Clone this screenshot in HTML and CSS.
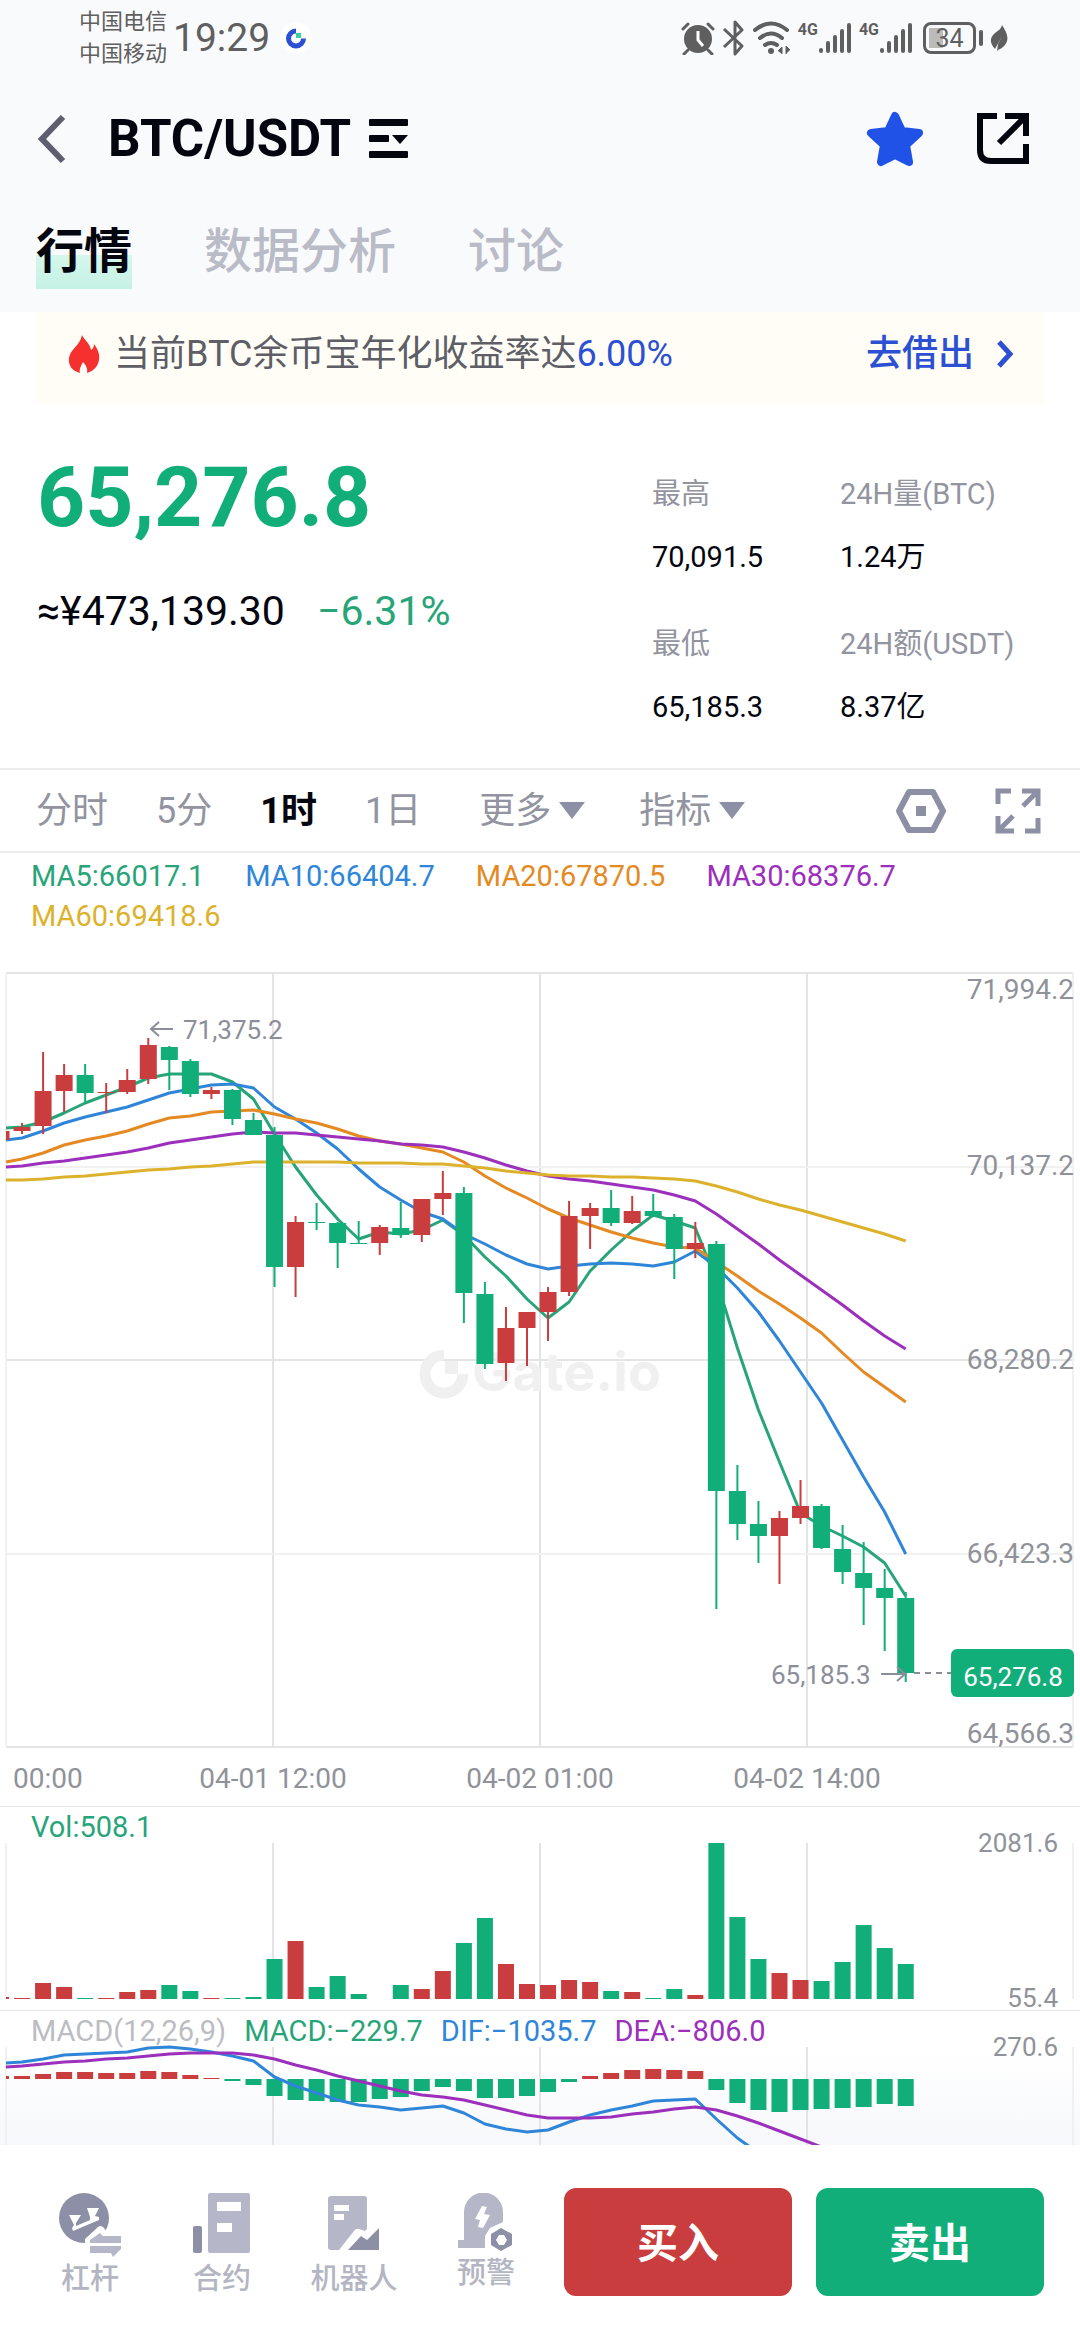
FILE: index.html
```html
<!DOCTYPE html>
<html lang="zh-CN">
<head>
  <meta charset="UTF-8" />
  <meta name="viewport" content="width=device-width, initial-scale=1.0" />
  <title>BTC/USDT</title>
  <link rel="stylesheet" href="styles.css">
</head>
<body>
  <header class="top">
    <div class="status">
      <div class="carriers"><span>中国电信</span><span>中国移动</span></div>
      <span class="clock">19:29</span>
      <svg class="app-dot" width="32" height="32" viewBox="0 0 32 32">
        <circle cx="16" cy="16" r="16" fill="#fff"/>
        <path d="M16 9a7.500 7.500 0 1 0 7.500 7.500" fill="none" stroke="#2c50d2" stroke-width="5"/>
        <path d="M16 11h5v5h-5z" fill="#3fcf9c"/>
      </svg>
      <div class="status-icons">
        <svg width="34" height="34" viewBox="0 0 34 34">
          <circle cx="17" cy="18" r="14" fill="#5f5f5f"/>
          <path d="M2 8l5-5M32 8l-5-5M7 29l-4 4M27 29l4 4" stroke="#5f5f5f" stroke-width="3" stroke-linecap="round"/>
          <path d="M17 10v9l5 6" fill="none" stroke="#fff" stroke-width="3"/>
        </svg>
        <svg width="24" height="36" viewBox="0 0 24 36">
          <path d="M2 9l18 17-7 8V2l7 8L2 27" fill="none" stroke="#5f5f5f" stroke-width="3" stroke-linejoin="round"/>
        </svg>
        <svg class="wifi" width="38" height="34" viewBox="0 0 38 34">
          <g fill="none" stroke="#5f5f5f" stroke-width="4" stroke-linecap="round">
            <path d="M2 9q16-13 32 0M7 17q11-9 22 0M12 24q6-4 12 0"/>
          </g>
          <circle cx="18" cy="30" r="3" fill="#5f5f5f"/>
          <path d="M25 30l4-4v7M37 29l-4-4v8" fill="#5f5f5f" stroke="#5f5f5f"/>
        </svg>
        <div class="signal">
          <span>4G</span>
          <svg width="34" height="32" viewBox="0 0 34 32">
            <path d="M3 28v1M10 21v8M17 15v14M24 9v20M31 3v26" stroke="#5f5f5f" stroke-width="4" stroke-linecap="round"/>
          </svg>
        </div>
        <div class="signal">
          <span>4G</span>
          <svg width="34" height="32" viewBox="0 0 34 32">
            <path d="M3 28v1M10 21v8M17 15v14M24 9v20M31 3v26" stroke="#5f5f5f" stroke-width="4" stroke-linecap="round"/>
          </svg>
        </div>
        <div class="battery"><span>34</span></div>
        <svg class="leaf" width="18" height="28" viewBox="0 0 18 28">
          <path d="M12 1c6 9 8 16 1 22-2 2-4 2-6 4l1-7 4-8-7 13C-1 19 0 13 5 9c4-3 6-4 7-8z" fill="#5f5f5f"/>
        </svg>
      </div>
    </div>

    <div class="title-bar">
      <button class="icon-btn back" aria-label="返回">
        <svg width="28" height="48" viewBox="0 0 28 48"><path d="M25 2L4 24l21 22" fill="none" stroke="#5d5e70" stroke-width="6"/></svg>
      </button>
      <h1>BTC/USDT</h1>
      <button class="icon-btn" aria-label="切换交易对">
        <svg width="40" height="40" viewBox="0 0 40 40" fill="#03050f">
          <rect x="0" y="0" width="39" height="7" rx="1"/>
          <rect x="0" y="16" width="20" height="7" rx="1"/>
          <path d="M23 16h16l-8 9z"/>
          <rect x="0" y="32" width="39" height="7" rx="1"/>
        </svg>
      </button>
      <button class="icon-btn star" aria-label="收藏">
        <svg width="58" height="56" viewBox="0 0 58 56">
          <path d="M29 5l7 15 17 2-13 12 3 17-14-7-14 7 3-17L5 22l17-2z" fill="#2152e8" stroke="#2152e8" stroke-width="8" stroke-linejoin="round"/>
        </svg>
      </button>
      <button class="icon-btn" aria-label="分享">
        <svg width="54" height="52" viewBox="0 0 54 52" fill="none" stroke="#03050f" stroke-width="6">
          <path d="M21 3H4v34q0 11 11 11h35V31M29 3h21v20M49 4L23 30"/>
        </svg>
      </button>
    </div>

    <nav class="tabs">
      <a href="#market" class="active">行情</a>
      <a href="#data">数据分析</a>
      <a href="#talk">讨论</a>
    </nav>
  </header>

  <main>
    <div class="notice">
      <svg width="32" height="38" viewBox="0 0 32 38">
        <path d="M14 0c2 5 8 8 9 15 2-1 3-3 3-6 4 5 6 11 5 16-1 6-5 11-12 13 1-4-1-8-4-11-2 4-4 7-3 11C4 36 0 30 1 23 2 14 12 11 14 0z" fill="#f5302f"/>
      </svg>
      <p>当前BTC余币宝年化收益率达<b>6.00%</b></p>
      <a href="#lend">去借出
        <svg width="18" height="28" viewBox="0 0 18 28"><path d="M3 2l11 12L3 26" fill="none" stroke="#2c50d2" stroke-width="5"/></svg>
      </a>
    </div>

    <section class="quote">
      <div>
        <p class="price">65,276.8</p>
        <p class="fiat">≈¥473,139.30 <span>−6.31%</span></p>
      </div>
      <dl class="stats">
        <div><dt>最高</dt><dd>70,091.5</dd></div>
        <div><dt>24H量(BTC)</dt><dd>1.24万</dd></div>
        <div><dt>最低</dt><dd>65,185.3</dd></div>
        <div><dt>24H额(USDT)</dt><dd>8.37亿</dd></div>
      </dl>
    </section>

    <div class="periods">
      <button>分时</button>
      <button>5分</button>
      <button class="active">1时</button>
      <button>1日</button>
      <button class="more">更多<i></i></button>
      <button class="more">指标<i></i></button>
      <button class="tool" aria-label="设置">
        <svg width="52" height="46" viewBox="0 0 52 46">
          <path d="M14 4h24l10 19-10 19H14L4 23z" fill="none" stroke="#8d90a5" stroke-width="6" stroke-linejoin="round"/>
          <rect x="21" y="18" width="10" height="10" fill="#8d90a5"/>
        </svg>
      </button>
      <button class="tool" aria-label="全屏">
        <svg width="46" height="46" viewBox="0 0 46 46" fill="none" stroke="#8d90a5" stroke-width="5">
          <path d="M3 16V3h13M43 30v13H30M27 3h16v15M42 4L28 18M19 43H3V28M4 42l14-14"/>
        </svg>
      </button>
    </div>

    <div class="legend averages">
      <span class="ma5">MA5:66017.1</span>
      <span class="ma10">MA10:66404.7</span>
      <span class="ma20">MA20:67870.5</span>
      <span class="ma30">MA30:68376.7</span>
      <span class="ma60">MA60:69418.6</span>
    </div>
    <svg class="chart" id="priceChart" viewBox="0 0 1080 846">
      <path class="grid" d="M6 13H1073M6 400H1073M6 787H1073M273 13V787M540 13V787M807 13V787"/>
      <path class="grid faint" d="M6 207H1073M6 594H1073M6 13V787M1073 13V787"/>
      <g class="watermark">
        <path d="M444 395a19 19 0 1 0 19 19" fill="none" stroke-width="11"/>
        <rect x="445" y="401" width="13" height="13" stroke="none"/>
        <text x="472" y="431">Gate.io</text>
      </g>
      <g id="pricePlot"></g>
      <path class="pointer" d="M173 69H152M159 62l-8 7 8 7M881 714H904M897 707l8 7-8 7"/>
      <text class="mark" x="183" y="79">71,375.2</text>
      <text class="mark" x="771" y="724">65,185.3</text>
      <path class="last-line" d="M914 713H951"/>
      <g class="axis end">
        <text x="1074" y="39">71,994.2</text>
        <text x="1074" y="215">70,137.2</text>
        <text x="1074" y="409">68,280.2</text>
        <text x="1074" y="603">66,423.3</text>
        <text x="1074" y="783">64,566.3</text>
      </g>
      <rect x="951" y="689" width="123" height="48" rx="6" fill="#12ae79"/>
      <text class="last" x="1013" y="726">65,276.8</text>
      <g class="axis">
        <text x="13" y="828">00:00</text>
        <g class="mid">
          <text x="273" y="828">04-01 12:00</text>
          <text x="540" y="828">04-02 01:00</text>
          <text x="807" y="828">04-02 14:00</text>
        </g>
      </g>
    </svg>

    <section class="pane">
      <div class="legend"><span class="ma5">Vol:508.1</span></div>
      <svg class="chart" viewBox="0 0 1080 167">
        <path class="grid" d="M273 0V156M540 0V156M807 0V156"/>
        <path class="grid faint" d="M6 0V156M1073 0V156"/>
        <g id="volPlot"></g>
        <g class="axis small end">
          <text x="1058" y="9">2081.6</text>
          <text x="1058" y="164">55.4</text>
        </g>
      </svg>
    </section>

    <section class="pane macd">
      <div class="legend">
        <span class="muted">MACD(12,26,9)</span>
        <span class="ma5">MACD:−229.7</span>
        <span class="ma10">DIF:−1035.7</span>
        <span class="ma30">DEA:−806.0</span>
      </div>
      <svg class="chart" viewBox="0 0 1080 98">
        <path class="grid" d="M273 0V98M540 0V98M807 0V98"/>
        <path class="grid faint" d="M6 0V98M1073 0V98"/>
        <g id="macdPlot"></g>
        <g class="axis small end"><text x="1058" y="9">270.6</text></g>
      </svg>
    </section>
  </main>

  <footer class="bottom">
    <nav>
      <a href="#margin">
        <svg width="62" height="64" viewBox="0 0 62 64">
          <circle cx="25" cy="25" r="25" fill="#8d8fa6"/>
          <path d="M10 22h12l-5 8v3l14-6v-3l-3-9h12l-4 8 4 1v3l-26 11-1-3 2-3z" fill="#fff"/>
          <path d="M26 52v-6l13-12q4-3 8 4h6v14z" fill="#fff"/>
          <path d="M31 50v-3l10-7 3 3h18v7zM31 53h31v3l-8 8-2-4H31z" fill="#b5b7c8"/>
        </svg>
        杠杆
      </a>
      <a href="#futures">
        <svg width="58" height="64" viewBox="0 0 58 64">
          <rect x="15" y="0" width="42" height="60" rx="2" fill="#b5b7c8"/>
          <path d="M24 9h24v9H24zM24 30h15v9H24z" fill="#fff"/>
          <rect x="0" y="33" width="9" height="27" rx="2" fill="#8d8fa6"/>
        </svg>
        合约
      </a>
      <a href="#bot">
        <svg width="52" height="64" viewBox="0 0 52 64">
          <path d="M3 3h33q3 0 3 3v30l-2 2-6-2q-3-1-5 2L11 57H3q-3 0-3-3V6q0-3 3-3z" fill="#b5b7c8"/>
          <path d="M6 12h15v6H6zM6 21h10v6H6z" fill="#fff"/>
          <path d="M20 57l13-14 6 4 12-12v22z" fill="#8d8fa6"/>
        </svg>
        机器人
      </a>
      <a href="#alert">
        <svg width="56" height="58" viewBox="0 0 56 58">
          <path d="M6 47V19a19 19 0 0 1 39 0v10l-13 6-5 8v12H0v-8z" fill="#b5b7c8"/>
          <path d="M24 13l5 1-3 7 6 1-7 13-5-1 2-7-5-1z" fill="#fff"/>
          <path d="M43 35l11 6v11l-11 6-10-6V41zM41 42l-3 5 3 5h5l3-5-3-5z" fill="#8d8fa6" fill-rule="evenodd"/>
        </svg>
        预警
      </a>
    </nav>
    <button class="buy">买入</button>
    <button class="sell">卖出</button>
  </footer>

  <script src="chart.js"></script>
</body>
</html>
```
FILE: styles.css
```css
* {
  box-sizing: border-box;
}
body {
  margin: 0;
  background-color: #fff;
  color: #03050f;
  font-family: Roboto, 'Noto Sans CJK SC', sans-serif;
}
h1, p, dl, dd {
  margin: 0;
}
a {
  text-decoration: none;
  color: inherit;
}
button {
  border: 0;
  padding: 0;
  background: none;
  color: inherit;
  font: inherit;
}
svg {
  display: block;
  flex-shrink: 0;
}

/* status bar + title */
.top {
  background-color: #f9fafc;
}
.status {
  display: flex;
  align-items: center;
  height: 76px;
  padding: 0 72px 0 79px;
  color: #5f5f5f;
}
.carriers {
  display: flex;
  flex-direction: column;
  font-size: 22px;
  line-height: 32px;
}
.clock {
  margin-left: 6px;
  font-size: 39px;
}
.app-dot {
  margin-left: 10px;
}
.status-icons {
  display: flex;
  align-items: center;
  gap: 7px;
  margin-left: auto;
}
.signal {
  display: flex;
  align-items: flex-start;
}
.signal span {
  font-size: 16px;
  line-height: 16px;
  font-weight: 700;
}
.battery {
  position: relative;
  width: 53px;
  height: 32px;
  margin-left: 3px;
  border: 3px solid #5f5f5f;
  border-radius: 8px;
  background: linear-gradient(#bbb, #bbb) 3px 3px / 14px 20px no-repeat;
  font-size: 25px;
  line-height: 28px;
  text-align: center;
}
.battery::after {
  content: '';
  position: absolute;
  right: -10px;
  top: 5px;
  width: 4px;
  height: 16px;
  border-radius: 2px;
  background-color: #5f5f5f;
}
.leaf {
  margin-left: 7px;
}
.title-bar {
  display: flex;
  align-items: center;
  height: 125px;
  padding: 0 50px 0 38px;
}
h1 {
  margin: 0 18px 0 42px;
  font-size: 51px;
  font-weight: 700;
}
.star {
  margin-left: auto;
  margin-right: 52px;
}
.tabs {
  display: flex;
  gap: 72px;
  height: 111px;
  padding: 14px 36px 0;
  font-size: 48px;
  line-height: 74px;
  font-weight: 500;
  color: #b9bbc7;
}
.tabs a {
  height: 74px;
}
.tabs .active {
  color: #03050f;
  font-weight: 700;
  background: linear-gradient(#d5f6ec, #c5f2e4) 0 100% / 100% 34px no-repeat;
}

/* lending notice */
.notice {
  display: flex;
  align-items: center;
  gap: 14px;
  height: 92px;
  margin: 0 36px;
  padding: 0 30px 8px 32px;
  background-color: #fffdf6;
  font-size: 36px;
  line-height: 48px;
  color: #5d5e66;
}
.notice b {
  font-weight: 400;
  color: #2c50d2;
}
.notice a {
  display: flex;
  align-items: center;
  gap: 22px;
  margin-left: auto;
  color: #2c50d2;
  font-weight: 500;
}

/* price */
.quote {
  display: flex;
  justify-content: space-between;
  height: 364px;
  padding: 50px 36px 0 37px;
}
.price {
  font-size: 84px;
  line-height: 88px;
  font-weight: 700;
  color: #12ae79;
}
.fiat {
  margin-top: 44px;
  font-size: 41px;
  line-height: 50px;
}
.fiat span {
  margin-left: 22px;
  color: #28a578;
}
.stats {
  display: grid;
  grid-template-columns: 188px 204px;
  align-content: start;
  font-size: 29px;
  line-height: 40px;
  padding-top: 20px;
}
.stats div {
  height: 150px;
}
.stats dt {
  color: #92949f;
}
.stats dd {
  margin-top: 23px;
}

/* period switch */
.periods {
  display: flex;
  align-items: center;
  gap: 48px;
  height: 85px;
  padding: 0 39px 0 36px;
  border-top: 2px solid #ededee;
  border-bottom: 2px solid #ededee;
  font-size: 36px;
  line-height: 48px;
  color: #92949f;
}
.periods .active {
  color: #03050f;
  font-weight: 700;
}
.more {
  display: flex;
  align-items: center;
  gap: 8px;
  margin-left: 10px;
}
.more + .more {
  margin-left: 6px;
}
.more i {
  border: 13px solid transparent;
  border-top: 17px solid #8d90a5;
  border-bottom: 0;
}
.tool:nth-last-child(2) {
  margin-left: auto;
}

/* charts */
.legend {
  display: flex;
  flex-wrap: wrap;
  column-gap: 18px;
  padding: 0 31px;
  font-size: 29px;
  line-height: 40px;
}
.averages {
  column-gap: 41px;
  padding-top: 3px;
  padding-bottom: 24px;
}
.ma5 { color: #28a578; }
.ma10 { color: #2f86d8; }
.ma20 { color: #e58a22; }
.ma30 { color: #9c2fbc; }
.ma60 { color: #dcb22c; }
.muted { color: #bcbdc2; }
.chart {
  width: 100%;
  height: auto;
  overflow: visible;
}
.grid {
  fill: none;
  stroke: #e4e4e6;
  stroke-width: 2;
}
.faint {
  stroke: #f1f1f2;
}
.axis text {
  font-size: 28px;
  fill: #909299;
}
.small text {
  font-size: 26px;
}
.end text {
  text-anchor: end;
}
.mid text {
  text-anchor: middle;
}
.mark {
  font-size: 26px;
  fill: #8b8e99;
}
.last {
  font-size: 26px;
  fill: #fff;
  text-anchor: middle;
}
.pointer {
  fill: none;
  stroke: #8b8e99;
  stroke-width: 2;
}
.last-line {
  stroke: #8b8e99;
  stroke-width: 2;
  stroke-dasharray: 6 5;
}
.watermark {
  fill: #f0f0f1;
  stroke: #f0f0f1;
}
.watermark text {
  font-family: Inter, sans-serif;
  font-size: 54px;
  font-weight: 700;
  stroke: none;
}
.up { fill: #c93d3e; stroke: #c93d3e; }
.down { fill: #12ae79; stroke: #12ae79; }
.bar { stroke: none; }
.wick { stroke-width: 2; }
.line {
  fill: none;
  stroke: currentColor;
  stroke-width: 3;
  stroke-linejoin: round;
}
.pane {
  border-top: 1px solid #e6e6e8;
}
.pane .legend {
  height: 36px;
}
.macd {
  overflow: hidden;
  background: linear-gradient(#fff 30%, #f7f8fb);
}

/* bottom bar */
.bottom {
  display: flex;
  gap: 24px;
  height: 195px;
  padding: 43px 36px 0 24px;
  background-color: #fff;
}
.bottom nav {
  display: grid;
  grid-template-columns: repeat(4, 1fr);
  flex: 132 1 0;
  margin-right: -12px;
}
.bottom nav a {
  display: flex;
  flex-direction: column;
  align-items: center;
  padding-top: 5px;
  font-size: 29px;
  line-height: 44px;
  font-weight: 500;
  color: #b3b5c3;
}
.bottom > button {
  flex: 57 1 0;
  height: 108px;
  padding-bottom: 4px;
  border-radius: 12px;
  color: #fff;
  font-size: 41px;
  font-weight: 700;
}
.buy { background-color: #c93d3e; }
.sell { background-color: #12ae79; }
```
FILE: chart.js
```js
const STEP = 21.04;
const LEFT = 6;
const xAt = i => 1 + i * STEP;

// dir, high, body top, body bottom, low
const candles = [
  ['up', 171, 171, 180, 180], ['up', 163, 167, 171, 174], ['up', 92, 131, 166, 174], ['up', 104, 115, 131, 152],
  ['down', 104, 115, 133, 143], ['up', 123, 132, 133, 153], ['up', 109, 120, 132, 134], ['up', 78, 85, 119, 124],
  ['down', 86, 87, 100, 130], ['down', 99, 101, 134, 137], ['up', 127, 130, 134, 139], ['down', 129, 130, 159, 165],
  ['down', 153, 160, 175, 175], ['down', 167, 175, 307, 327], ['up', 256, 262, 307, 337], ['down', 243, 262, 263, 270],
  ['down', 262, 263, 283, 308], ['down', 261, 283, 284, 284], ['up', 265, 267, 283, 295], ['down', 242, 268, 275, 278],
  ['up', 239, 239, 275, 282], ['up', 211, 233, 239, 255], ['down', 227, 233, 333, 363], ['down', 322, 334, 404, 409],
  ['up', 347, 368, 403, 421], ['up', 352, 352, 368, 406], ['up', 327, 332, 352, 381], ['up', 241, 256, 332, 336],
  ['up', 243, 248, 256, 289], ['down', 230, 248, 263, 266], ['up', 236, 251, 263, 264], ['down', 234, 251, 256, 257],
  ['down', 254, 257, 289, 319], ['up', 262, 283, 289, 298], ['down', 281, 284, 531, 649], ['down', 505, 531, 564, 580],
  ['down', 541, 564, 576, 603], ['up', 551, 558, 576, 624], ['up', 520, 546, 558, 564], ['down', 544, 546, 588, 589],
  ['down', 565, 589, 612, 624], ['down', 582, 613, 628, 665], ['down', 609, 628, 638, 691], ['down', 632, 638, 713, 722]
];

const averages = {
  ma5: [168, 167, 162, 153, 143, 135, 127, 118, 114, 114, 114, 122, 139, 174, 207, 235, 259, 279, 272, 274, 270, 260,
    275, 297, 316, 339, 358, 342, 311, 290, 271, 255, 261, 268, 320, 388, 450, 502, 553, 566, 576, 587, 603, 636],
  ma10: [180, 178, 171, 163, 157, 152, 147, 140, 133, 129, 125, 124, 128, 147, 159, 173, 189, 209, 227, 240, 252, 259,
    274, 284, 295, 304, 309, 306, 304, 303, 304, 306, 302, 291, 307, 328, 352, 381, 412, 443, 480, 517, 552, 594],
  ma20: [202, 199, 193, 185, 180, 176, 171, 164, 158, 156, 152, 151, 150, 154, 159, 163, 169, 176, 181, 184, 188, 192,
    202, 216, 228, 238, 249, 258, 265, 272, 278, 283, 287, 288, 302, 316, 331, 344, 358, 373, 393, 412, 427, 442],
  ma30: [207, 206, 203, 201, 198, 195, 192, 188, 183, 180, 177, 174, 172, 173, 173, 175, 177, 179, 181, 184, 185, 187,
    192, 198, 205, 211, 216, 219, 221, 224, 227, 230, 235, 241, 254, 269, 284, 300, 315, 330, 345, 361, 376, 389],
  ma60: [220, 220, 219, 217, 216, 214, 212, 210, 209, 207, 206, 204, 202, 202, 202, 202, 202, 203, 203, 203, 204, 204,
    206, 208, 211, 213, 215, 216, 216, 217, 217, 218, 219, 221, 226, 232, 239, 245, 250, 256, 262, 268, 274, 281]
};

const volumes = [2, 1, 16, 12, 1, 1, 7, 9, 14, 8, 1, 1, 2, 40, 58, 12, 23, 5, 0, 14, 10, 28, 56, 81, 35, 15, 14, 19, 17,
  8, 7, 1, 10, 4, 156, 82, 40, 26, 19, 18, 37, 74, 51, 35];

const macd = [3, 3, 5, 7, 7, 6, 6, 8, 7, 4, 1, -2, -6, -17, -21, -22, -23, -23, -20, -18, -12, -8, -12, -19, -19, -17,
  -13, -3, 3, 6, 9, 10, 9, 8, -11, -24, -31, -33, -31, -30, -29, -28, -25, -27];
const dif = [16, 15, 12, 8, 7, 6, 5, 1, 0, 2, 5, 9, 14, 30, 39, 46, 53, 58, 60, 63, 61, 59, 66, 77, 82, 85, 83, 75, 68,
  63, 59, 54, 53, 52, 72, 91, 106];
const dea = [20, 19, 17, 15, 14, 12, 11, 9, 7, 6, 6, 6, 8, 12, 18, 23, 29, 34, 39, 44, 48, 50, 53, 58, 63, 68, 71, 71,
  71, 70, 67, 65, 62, 60, 63, 69, 76, 84, 92, 100];

// the first bar is cut off by the left edge of the plot
function bar(i, top, height, width, cls) {
  const x = Math.max(xAt(i) - width / 2, LEFT);
  const w = xAt(i) + width / 2 - x;
  return `<rect class="${cls} bar" x="${x}" y="${top}" width="${w}" height="${height}"/>`;
}

function line(values, cls) {
  const points = values.map((y, i) => `${Math.max(xAt(i), LEFT)},${y}`).join(' ');
  return `<polyline class="line ${cls}" points="${points}"/>`;
}

function drawPrice() {
  let out = '';
  for (const name in averages) out += line(averages[name], name);
  candles.forEach(([dir, high, top, bottom, low], i) => {
    if (i > 0) out += `<path class="${dir} wick" d="M${xAt(i)} ${high}V${low}"/>`;
    out += bar(i, top, bottom - top, 17, dir);
  });
  document.getElementById('pricePlot').innerHTML = out;
}

function drawVolume() {
  document.getElementById('volPlot').innerHTML =
    volumes.map((v, i) => bar(i, 156 - v, v, 16, candles[i][0])).join('');
}

function drawMacd() {
  const zero = 32;
  let out = macd.map((v, i) => bar(i, v > 0 ? zero - v : zero, Math.abs(v), 16, v > 0 ? 'up' : 'down')).join('');
  out += line(dif, 'ma10') + line(dea, 'ma30');
  document.getElementById('macdPlot').innerHTML = out;
}

drawPrice();
drawVolume();
drawMacd();
```
